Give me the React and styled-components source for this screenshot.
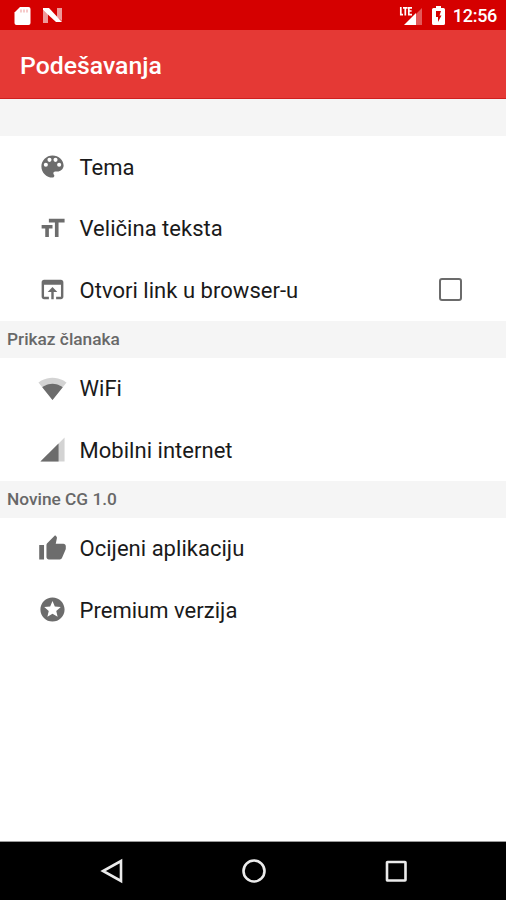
import styled, { createGlobalStyle } from "styled-components";

const GlobalStyle = createGlobalStyle`
  body {
    margin: 0;
    background-color: #fff;
    font-family: Roboto, "Noto Sans", sans-serif;
  }
`;

const Screen = styled.div`
  display: flex;
  flex-direction: column;
  width: 100%;
  height: 900px;
  overflow: hidden;
  background-color: #fff;
`;

const StatusBar = styled.div`
  display: flex;
  align-items: center;
  justify-content: space-between;
  box-sizing: border-box;
  flex: none;
  height: 30px;
  padding: 1px 9px 0 14px;
  background-color: #d50000;
  color: #fff;
`;

const StatusGroup = styled.div`
  display: flex;
  align-items: center;
  gap: ${(props) => props.$gap};
`;

const Clock = styled.span`
  margin-left: -1px;
  font-size: 18px;
  font-weight: 500;
  line-height: 29px;
  letter-spacing: -0.3px;
`;

const Toolbar = styled.header`
  display: flex;
  align-items: center;
  box-sizing: border-box;
  flex: none;
  height: 69px;
  padding: 4px 20px 0;
  background-color: #e53935;
  border-bottom: 1px solid #cf201f;
`;

const Title = styled.h1`
  margin: 0;
  color: #fff;
  font-size: 24.8px;
  font-weight: 500;
  line-height: 30px;
`;

const List = styled.main`
  flex: 1;
`;

const SectionHeader = styled.div`
  box-sizing: border-box;
  height: 37px;
  padding-left: 7px;
  background-color: #f5f5f5;
  color: #686868;
  font-size: 17.3px;
  font-weight: 500;
  line-height: 37px;
`;

const Row = styled.div`
  display: flex;
  align-items: center;
  box-sizing: border-box;
  height: 61.5px;
  padding: 0 44px 0 37.5px;
`;

const Icon = styled.svg`
  flex: none;
  width: 29px;
  height: 29px;
  fill: #6c6c6c;
`;

const Label = styled.span`
  flex: 1;
  margin-left: 13px;
  padding-top: 2px;
  color: #1a1a1a;
  font-size: 22px;
  line-height: 30px;
  letter-spacing: 0.03px;
`;

const Checkbox = styled.span`
  box-sizing: border-box;
  width: 23px;
  height: 23px;
  border: 2px solid #6b6b6b;
  border-radius: 3px;
`;

const NavBar = styled.nav`
  display: flex;
  align-items: center;
  justify-content: space-around;
  box-sizing: border-box;
  flex: none;
  height: 59px;
  padding: 0 39px 0 41px;
  background-color: #000;
  border-top: 1px solid #9a9a9a;
`;

const NavIcon = styled.svg`
  width: 26px;
  height: 26px;
  fill: none;
  stroke: #ebebeb;
  stroke-width: 2.6;
`;

const icons = {
  palette: (
    <path d="M12 2.800c-5.100 0-9.200 4.100-9.200 9.200s4.100 9.200 9.200 9.200c.83 0 1.500-.67 1.500-1.500 0-.39-.15-.74-.39-1.010-.23-.26-.38-.61-.38-.99 0-.83.67-1.500 1.500-1.500H16c2.760 0 5.200-2.240 5.200-5 0-4.420-4.130-8.400-9.200-8.400zm-5.500 9.400a1.700 1.700 0 1 1 0-3.400 1.700 1.700 0 0 1 0 3.400zm3-4a1.700 1.700 0 1 1 0-3.400 1.700 1.700 0 0 1 0 3.400zm5 0a1.700 1.700 0 1 1 0-3.400 1.700 1.700 0 0 1 0 3.400zm3 4a1.700 1.700 0 1 1 0-3.400 1.700 1.700 0 0 1 0 3.400z" />
  ),
  textSize: <path d="M9 4v3h5v12h3V7h5V4H9zm-6 8h3v7h3v-7h3V9H3v3z" />,
  openInBrowser: (
    <path d="M19 4H5c-1.110 0-2 .9-2 2v12c0 1.100.89 2 2 2h4v-2H5V8h14v10h-4v2h4c1.100 0 2-.9 2-2V6c0-1.100-.89-2-2-2zm-7 6l-4 4h3v6h2v-6h3l-4-4z" />
  ),
  wifi: (
    <>
      <path
        fillOpacity="0.3"
        d="M12.010 21.490L23.640 7c-.45-.34-4.930-4-11.640-4C5.280 3 .81 6.660.36 7l11.630 14.490.01.01.01-.01z"
      />
      <path d="M3.530 10.950l8.460 10.540.01.01.01-.01 8.460-10.540C20.040 10.620 16.810 8 12 8c-4.810 0-8.040 2.620-8.470 2.950z" />
    </>
  ),
  cellular: (
    <>
      <path fillOpacity="0.3" d="M2 22h20V2z" />
      <path d="M17 7L2 22h15z" />
    </>
  ),
  thumbUp: (
    <path d="M1 21h4V9H1v12zm22-11c0-1.100-.9-2-2-2h-6.310l.95-4.570.03-.32c0-.41-.17-.79-.44-1.060L14.170 1 7.590 7.590C7.220 7.950 7 8.450 7 9v10c0 1.100.9 2 2 2h9c.83 0 1.540-.5 1.840-1.220l3.020-7.050c.09-.23.14-.47.14-.73v-2z" />
  ),
  stars: (
    <path d="M11.990 2C6.470 2 2 6.480 2 12s4.470 10 9.990 10C17.520 22 22 17.520 22 12S17.520 2 11.990 2zm4.240 16L12 15.450 7.770 18l1.120-4.810-3.730-3.230 4.920-.42L12 5l1.920 4.530 4.920.42-3.730 3.230L16.230 18z" />
  ),
};

const sections = [
  {
    title: "",
    items: [
      { icon: "palette", label: "Tema" },
      { icon: "textSize", label: "Veličina teksta" },
      { icon: "openInBrowser", label: "Otvori link u browser-u", checkbox: true },
    ],
  },
  {
    title: "Prikaz članaka",
    items: [
      { icon: "wifi", label: "WiFi" },
      { icon: "cellular", label: "Mobilni internet" },
    ],
  },
  {
    title: "Novine CG 1.0",
    items: [
      { icon: "thumbUp", label: "Ocijeni aplikaciju" },
      { icon: "stars", label: "Premium verzija" },
    ],
  },
];

function SettingsRow({ icon, label, checkbox }) {
  return (
    <Row>
      <Icon viewBox="0 0 24 24">{icons[icon]}</Icon>
      <Label>{label}</Label>
      {checkbox && <Checkbox role="checkbox" aria-checked="false" />}
    </Row>
  );
}

function Status() {
  return (
    <StatusBar>
      <StatusGroup $gap="12px">
        <svg width="17" height="20" viewBox="0 0 17 20">
          <path
            fill="#fff"
            d="M6 1h8.500a2 2 0 0 1 2 2v14a2 2 0 0 1-2 2h-12a2 2 0 0 1-2-2V6.500z"
          />
          <path
            stroke="#d50000"
            strokeOpacity="0.35"
            strokeWidth="1.200"
            d="M7 3.500v3M10 3.500v3M13 3.500v3"
          />
        </svg>
        <svg width="20" height="17" viewBox="0 0 20 17">
          <path fill="#fff" fillOpacity="0.6" d="M0 3l5 4v9H0zM14 1h5v13l-5-4z" />
          <path fill="#fff" d="M0 1h6l13 14h-6L0 3z" />
        </svg>
      </StatusGroup>
      <StatusGroup $gap="9px">
        <svg width="24" height="20" viewBox="0 0 24 20">
          <path fill="#fff" fillOpacity="0.35" d="M17 8l6-6v17h-6z" />
          <path fill="#fff" d="M5 19L17 7v12z" />
          <path
            fill="none"
            stroke="#fff"
            strokeWidth="1.700"
            d="M1.800 1v7.700H4M4 1.800h4.600M6.300 1.800V9.500M13 1.800H9.800v6.900H13M9.800 5h2.800"
          />
        </svg>
        <svg width="13" height="19" viewBox="0 0 13 19">
          <path
            fill="#fff"
            fillRule="evenodd"
            d="M4 0h5v2h2.500A1.500 1.500 0 0 1 13 3.500v14a1.500 1.500 0 0 1-1.500 1.500h-10A1.500 1.500 0 0 1 0 17.500v-14A1.500 1.500 0 0 1 1.500 2H4zM4 5v6h2v5l3.500-6.500h-2L9 5z"
          />
        </svg>
        <Clock>12:56</Clock>
      </StatusGroup>
    </StatusBar>
  );
}

function App() {
  return (
    <>
      <GlobalStyle />
      <Screen>
        <Status />
        <Toolbar>
          <Title>Podešavanja</Title>
        </Toolbar>
        <List>
          {sections.map((section) => (
            <section key={section.title}>
              <SectionHeader>{section.title}</SectionHeader>
              {section.items.map((item) => (
                <SettingsRow key={item.label} {...item} />
              ))}
            </section>
          ))}
        </List>
        <NavBar>
          <NavIcon viewBox="0 0 26 26">
            <path d="M22 3v20L4 13z" />
          </NavIcon>
          <NavIcon viewBox="0 0 26 26">
            <circle cx="13" cy="13" r="10.500" />
          </NavIcon>
          <NavIcon viewBox="0 0 26 26">
            <rect x="4" y="4" width="18.500" height="18.500" rx="0.500" />
          </NavIcon>
        </NavBar>
      </Screen>
    </>
  );
}

export default App;
